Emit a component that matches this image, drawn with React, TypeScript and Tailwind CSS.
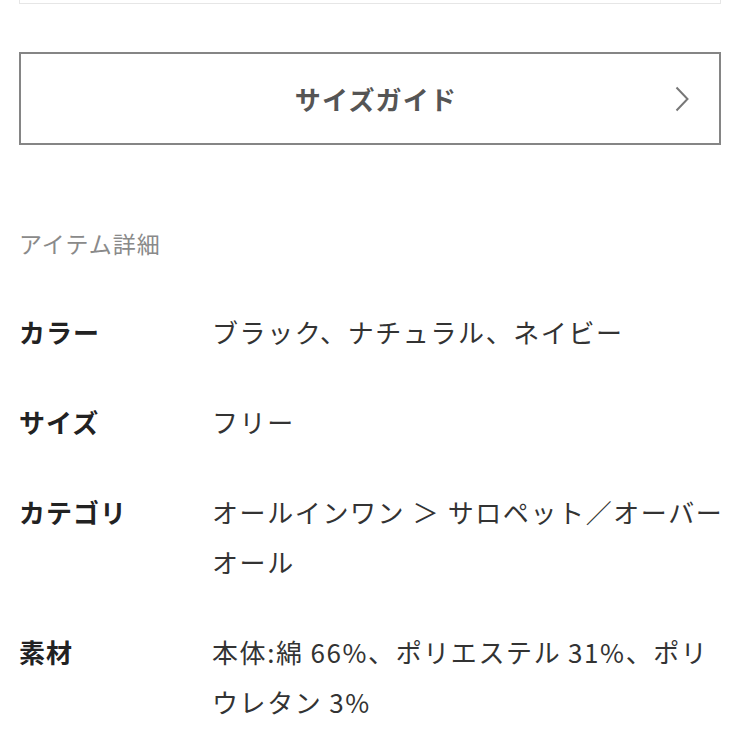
import React from "react";

const rows: { label: string; lines: string[] }[] = [
  { label: "カラー", lines: ["ブラック、ナチュラル、ネイビー"] },
  { label: "サイズ", lines: ["フリー"] },
  { label: "カテゴリ", lines: ["オールインワン ＞ サロペット／オーバー", "オール"] },
  { label: "素材", lines: ["本体:綿\u200966%、ポリエステル\u200931%、ポリ", "ウレタン\u20093%"] },
];

export default function App() {
  return (
    <div
      className="w-[752px] h-[752px] bg-white overflow-hidden"
      style={{ fontFamily: '"Noto Sans CJK JP", "Noto Sans", sans-serif' }}
    >
      <div className="ml-[19px] w-[702px]">
        <div className="h-[4px] border border-t-0 border-[#e6e6e6]" />
        <button className="mt-[48px] w-full h-[93px] border-2 border-[#858585] bg-white relative flex items-center justify-center">
          <span className="text-[26px] font-bold text-[#555] tracking-[1.2px] ml-[12px]">サイズガイド</span>
          <svg
            className="absolute right-[30px] top-1/2 -translate-y-1/2"
            width="14"
            height="26"
            viewBox="0 0 14 26"
            fill="none"
          >
            <path d="M1.5 1.5 L12.5 13 L1.5 24.5" stroke="#777" strokeWidth="2" />
          </svg>
        </button>
        <div className="mt-[82px] text-[23px] leading-[32px] text-[#8a8a8a] tracking-[1px]">アイテム詳細</div>
        <div className="mt-[48px] flex flex-col gap-[40px]">
          {rows.map((r) => (
            <div key={r.label} className="flex text-[26px] leading-[50px]">
              <div className="w-[193px] shrink-0 font-bold text-[#222] tracking-[1px]">{r.label}</div>
              <div className="flex-1 text-[#333] tracking-[1.6px] whitespace-nowrap">
                {r.lines.map((l, i) => (
                  <div key={i}>{l}</div>
                ))}
              </div>
            </div>
          ))}
        </div>
      </div>
    </div>
  );
}
